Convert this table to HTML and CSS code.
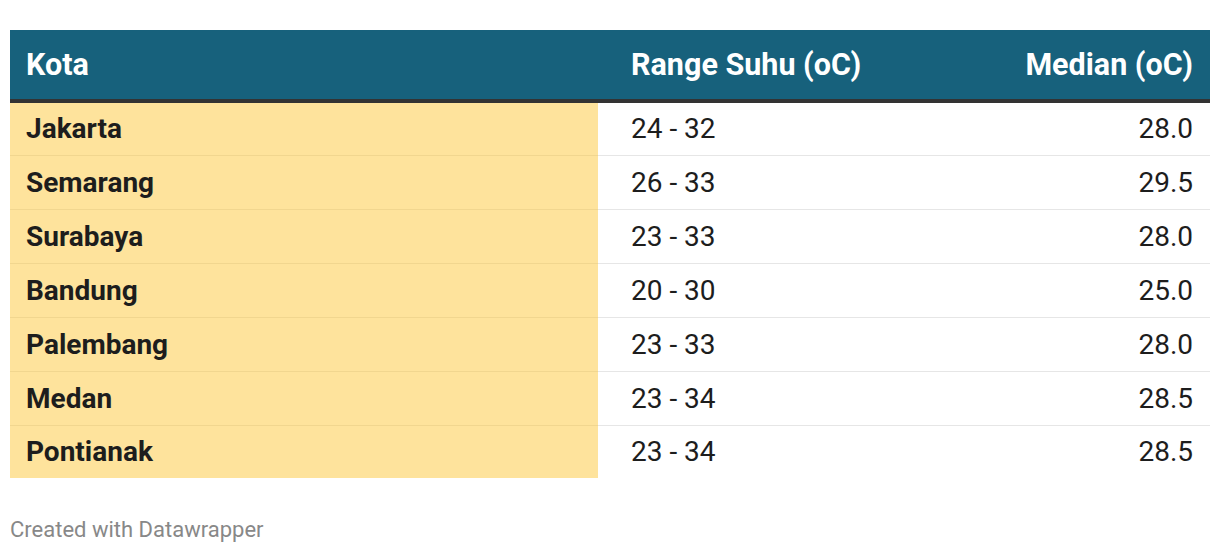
FILE: index.html
```html
<!DOCTYPE html>
<html>
<head>
<meta charset="utf-8">
<link rel="stylesheet" href="styles.css">
</head>
<body>
<div class="chart">
  <table class="tbl">
    <thead>
      <tr>
        <th class="c-city">Kota</th>
        <th class="c-range">Range Suhu (oC)</th>
        <th class="c-med">Median (oC)</th>
      </tr>
    </thead>
    <tbody>
      <tr><td class="c-city">Jakarta</td><td class="c-range">24 - 32</td><td class="c-med">28.0</td></tr>
      <tr><td class="c-city">Semarang</td><td class="c-range">26 - 33</td><td class="c-med">29.5</td></tr>
      <tr><td class="c-city">Surabaya</td><td class="c-range">23 - 33</td><td class="c-med">28.0</td></tr>
      <tr><td class="c-city">Bandung</td><td class="c-range">20 - 30</td><td class="c-med">25.0</td></tr>
      <tr><td class="c-city">Palembang</td><td class="c-range">23 - 33</td><td class="c-med">28.0</td></tr>
      <tr><td class="c-city">Medan</td><td class="c-range">23 - 34</td><td class="c-med">28.5</td></tr>
      <tr><td class="c-city">Pontianak</td><td class="c-range">23 - 34</td><td class="c-med">28.5</td></tr>
    </tbody>
  </table>
  <div class="footer">Created with Datawrapper</div>
</div>
</body>
</html>
```
FILE: styles.css
```css
html, body {
  margin: 0;
  padding: 0;
  background: #ffffff;
}
body {
  font-family: Roboto, "Liberation Sans", sans-serif;
  color: #1d1d1d;
}
.chart {
  padding: 30px 10px 0 10px;
}
.tbl {
  width: 1200px;
  border-collapse: collapse;
  table-layout: fixed;
}
.tbl th {
  background: #17617c;
  color: #ffffff;
  font-weight: 700;
  font-size: 30.5px;
  height: 71px;
  padding: 0 17px;
  text-align: left;
  border-bottom: 4px solid #333333;
  box-sizing: border-box;
}
.tbl td {
  font-size: 28px;
  height: 54px;
  padding: 0 17px;
  border-bottom: 1px solid #e6e6e6;
  box-sizing: border-box;
  vertical-align: middle;
}
.tbl tbody tr:last-child td {
  border-bottom: none;
  height: 53px;
}
.c-city {
  width: 588px;
  padding-left: 16px !important;
}
td.c-city {
  background: #fee39c;
  font-weight: 700;
  border-bottom-color: #f1d68f !important;
}
.c-range {
  width: 350px;
  padding-left: 33px !important;
}
.c-med {
  text-align: right !important;
}
.footer {
  margin-top: 39px;
  font-size: 22px;
  color: #888888;
}
```
